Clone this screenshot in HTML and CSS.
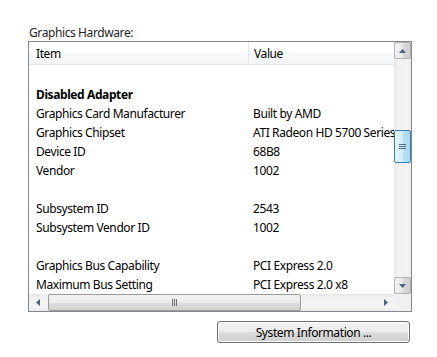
FILE: index.html
```html
<!DOCTYPE html>
<html>
<head>
<meta charset="utf-8">
<link rel="stylesheet" href="styles.css">
</head>
<body>
<div class="panel">
  <div class="label">Graphics Hardware:</div>
  <div class="listbox">
    <div class="view">
      <div class="header">
        <div class="hcell c1">Item</div>
        <div class="hcell c2">Value</div>
      </div>
      <div class="row"><div class="c1"></div><div class="c2"></div></div>
      <div class="row"><div class="c1 bold">Disabled Adapter</div><div class="c2"></div></div>
      <div class="row"><div class="c1">Graphics Card Manufacturer</div><div class="c2">Built by AMD</div></div>
      <div class="row"><div class="c1">Graphics Chipset</div><div class="c2">ATI Radeon HD 5700 Series</div></div>
      <div class="row"><div class="c1">Device ID</div><div class="c2">68B8</div></div>
      <div class="row"><div class="c1">Vendor</div><div class="c2">1002</div></div>
      <div class="row"><div class="c1"></div><div class="c2"></div></div>
      <div class="row"><div class="c1">Subsystem ID</div><div class="c2">2543</div></div>
      <div class="row"><div class="c1">Subsystem Vendor ID</div><div class="c2">1002</div></div>
      <div class="row"><div class="c1"></div><div class="c2"></div></div>
      <div class="row"><div class="c1">Graphics Bus Capability</div><div class="c2">PCI Express 2.0</div></div>
      <div class="row"><div class="c1">Maximum Bus Setting</div><div class="c2">PCI Express 2.0 x8</div></div>
    </div>
    <div class="vscroll">
      <div class="sbtn">
        <svg width="7" height="4" viewBox="0 0 7 4"><path d="M0 4 L3.5 0 L7 4 Z" fill="#4d6185"/></svg>
      </div>
      <div class="vtrack">
        <div class="vthumb">
          <svg width="7" height="7" viewBox="0 0 7 7"><path d="M0 1.5h7M0 3.5h7M0 5.5h7" stroke="#4d6e8f" stroke-width="1"/></svg>
        </div>
      </div>
      <div class="sbtn">
        <svg width="7" height="4" viewBox="0 0 7 4"><path d="M0 0 L3.5 4 L7 0 Z" fill="#4d6185"/></svg>
      </div>
    </div>
    <div class="hscroll">
      <div class="harrow">
        <svg width="4" height="7" viewBox="0 0 4 7"><path d="M4 0 L0 3.5 L4 7 Z" fill="#4d6185"/></svg>
      </div>
      <div class="htrack">
        <div class="hthumb">
          <svg width="7" height="7" viewBox="0 0 7 7"><path d="M1.5 0v7M3.5 0v7M5.5 0v7" stroke="#6f6f6f" stroke-width="1"/></svg>
        </div>
      </div>
      <div class="harrow">
        <svg width="4" height="7" viewBox="0 0 4 7"><path d="M0 0 L4 3.5 L0 7 Z" fill="#4d6185"/></svg>
      </div>
    </div>
    <div class="corner"></div>
  </div>
  <div class="actions">
    <button class="btn">System Information ...</button>
  </div>
</div>
</body>
</html>
```

FILE: styles.css
```css
html, body {
  margin: 0;
  padding: 0;
  background: #ffffff;
}
body {
  font-family: "Noto Sans", "Open Sans", sans-serif;
  font-size: 12px;
  letter-spacing: -0.4px;
  color: #000;
}
.panel {
  padding: 24px 0 0 28px;
  width: 384px;
}
.label {
  height: 17px;
  line-height: 18px;
  padding-left: 1px;
  color: #1e1e1e;
}
.listbox {
  width: 382px;
  height: 269px;
  border: 1px solid #828790;
  display: grid;
  grid-template-columns: 365px 17px;
  grid-template-rows: 252px 17px;
  background: #fff;
}
.view {
  overflow: hidden;
  white-space: nowrap;
}
.header {
  display: flex;
  height: 22px;
  border-bottom: 1px solid #e5e5e5;
  background: linear-gradient(#ffffff, #ffffff 50%, #f7f8fa 51%, #f3f4f6);
}
.hcell {
  line-height: 24px;
}
.header .c1 {
  border-right: 1px solid #e3e8ee;
}
.c1 {
  width: 212px;
  padding-left: 7px;
  flex: none;
}
.c2 {
  padding-left: 5px;
  flex: none;
}
.row {
  display: flex;
  height: 19px;
  line-height: 21px;
}
.bold {
  font-weight: bold;
}
.vscroll {
  display: flex;
  flex-direction: column;
  background: linear-gradient(90deg, #e6e6e6, #f1f1f1 20%, #f4f4f4 80%, #eaeaea);
}
.sbtn {
  border: 1px solid #b0b0b0;
  border-radius: 2px;
  box-sizing: border-box;
  height: 17px;
  width: 17px;
  background: linear-gradient(90deg, #f2f2f2, #e9e9e9 50%, #d8d8d8 51%, #d0d0d0);
  display: flex;
  align-items: center;
  justify-content: center;
}
.vtrack {
  flex: 1;
  position: relative;
}
.vthumb {
  position: absolute;
  top: 71px;
  left: 0;
  width: 17px;
  height: 33px;
  box-sizing: border-box;
  border: 1px solid #3c7fb1;
  border-radius: 2px;
  background: linear-gradient(90deg, #e3f4fc, #d6eef9 50%, #b5e0f5 51%, #a9d9f2);
  display: flex;
  align-items: center;
  justify-content: center;
}
.hscroll {
  display: flex;
  align-items: stretch;
  background: linear-gradient(#e6e6e6, #f1f1f1 20%, #f4f4f4 80%, #eaeaea);
}
.harrow {
  width: 17px;
  display: flex;
  align-items: center;
  justify-content: center;
}
.htrack {
  flex: 1;
  position: relative;
}
.hthumb {
  position: absolute;
  left: 2px;
  top: 0;
  width: 253px;
  height: 17px;
  box-sizing: border-box;
  border: 1px solid #9a9a9a;
  border-radius: 2px;
  background: linear-gradient(#f2f2f2, #ebebeb 50%, #dcdcdc 51%, #d2d2d2);
  display: flex;
  align-items: center;
  justify-content: center;
}
.corner {
  background: #f0f0f0;
}
.actions {
  display: flex;
  justify-content: flex-end;
  padding-top: 9px;
}
.btn {
  width: 193px;
  height: 22px;
  margin-right: 2px;
  font-family: inherit;
  font-size: 12px;
  letter-spacing: -0.4px;
  color: #000;
  border: 1px solid #707070;
  border-radius: 3px;
  background: linear-gradient(#f2f2f2, #ebebeb 50%, #dddddd 51%, #cfcfcf);
  box-shadow: inset 0 0 0 1px #fcfcfc;
  padding: 0;
}
```
